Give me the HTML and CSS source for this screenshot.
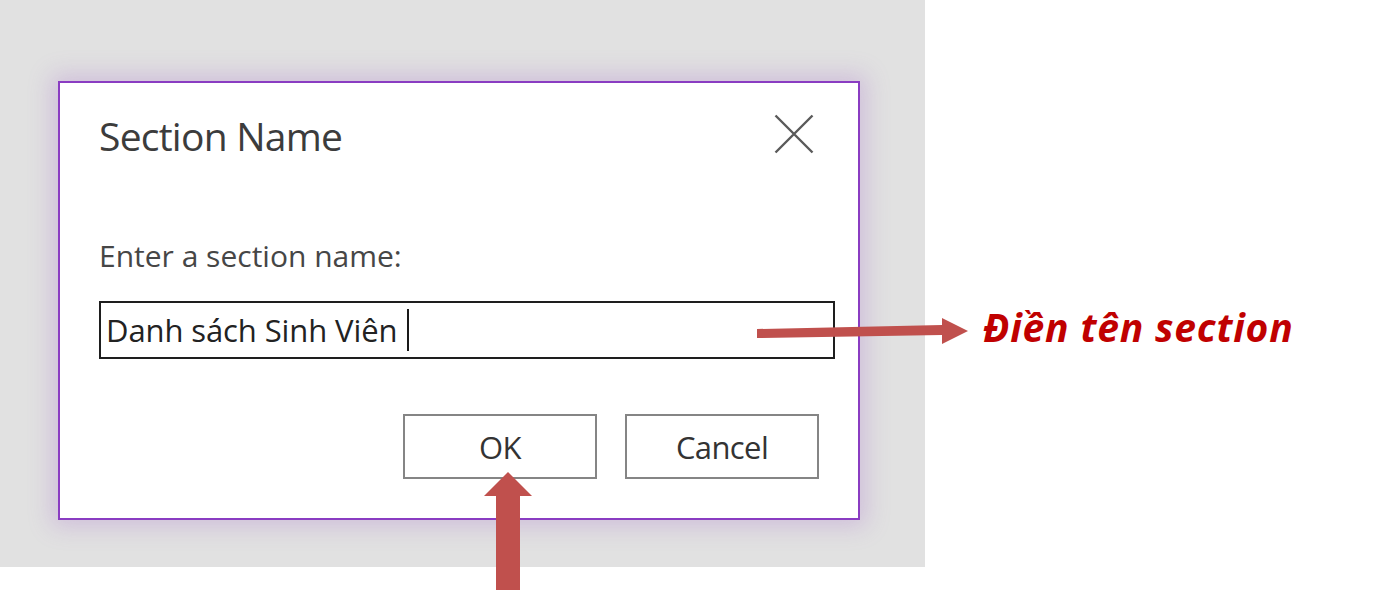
FILE: index.html
```html
<!DOCTYPE html>
<html lang="vi">
<head>
<meta charset="utf-8">
<title>Section Name</title>
<link rel="stylesheet" href="styles.css">
</head>
<body>
<div class="page">
  <div class="stage">
    <div class="dialog">
      <div class="dialog-header">
        <div class="dialog-title">Section Name</div>
        <button class="close-btn" aria-label="Close">
          <svg width="40" height="40" viewBox="0 0 40 40"><path d="M1.5 1.5 L38.5 38.5 M38.5 1.5 L1.5 38.5" stroke="#5a5a5a" stroke-width="2.4" fill="none"/></svg>
        </button>
      </div>
      <div class="field-label">Enter a section name:</div>
      <div class="text-input"><span class="input-text">Danh sách Sinh Viên</span><span class="caret"></span></div>
      <div class="actions">
        <button class="btn">OK</button>
        <button class="btn">Cancel</button>
      </div>
    </div>
  </div>
  <svg class="annotations" width="1394" height="590" viewBox="0 0 1394 590">
    <polygon points="757,329 942,325 942,318 968,331 942,344 942,335 757,338" fill="#c0504d"/>
    <polygon points="508,472 532,496 520,496 520,590 496,590 496,496 484,496" fill="#c0504d"/>
  </svg>
  <div class="note">Điền tên section</div>
</div>
</body>
</html>
```
FILE: styles.css
```css
html, body {
  margin: 0;
  padding: 0;
  background: #ffffff;
}
.page {
  position: relative;
  width: 1394px;
  height: 590px;
  overflow: hidden;
  font-family: "Open Sans", "Noto Sans", sans-serif;
}
.stage {
  width: 925px;
  height: 567px;
  background: #e1e1e1;
  box-sizing: border-box;
  padding-top: 81px;
  padding-left: 58px;
}
.dialog {
  width: 802px;
  height: 439px;
  box-sizing: border-box;
  border: 2px solid #8a3cc2;
  background: #ffffff;
  box-shadow: 0 0 22px 6px rgba(160, 100, 200, 0.28);
  padding: 27px 0 0 39px;
  display: flex;
  flex-direction: column;
}
.dialog-header {
  display: flex;
  justify-content: space-between;
  align-items: flex-start;
}
.dialog-title {
  font-size: 39px;
  line-height: 52px;
  color: #3c3c3c;
  letter-spacing: -0.75px;
}
.close-btn {
  margin: 4px 44px 0 0;
  padding: 0;
  border: none;
  background: none;
  width: 40px;
  height: 40px;
  display: block;
}
.close-btn svg {
  display: block;
}
.field-label {
  margin-top: 74px;
  font-size: 30px;
  line-height: 40px;
  color: #464646;
}
.text-input {
  margin-top: 25px;
  width: 736px;
  height: 58px;
  box-sizing: border-box;
  border: 2px solid #1e1e1e;
  padding-left: 5px;
  display: flex;
  align-items: center;
}
.input-text {
  font-size: 31px;
  line-height: 54px;
  color: #222222;
  letter-spacing: -0.1px;
}
.caret {
  display: inline-block;
  width: 2px;
  height: 42px;
  background: #1a1a1a;
  margin-left: 10px;
}
.actions {
  margin-top: 55px;
  margin-right: 39px;
  display: flex;
  justify-content: flex-end;
  gap: 28px;
}
.btn {
  width: 194px;
  height: 65px;
  box-sizing: border-box;
  border: 2px solid #858585;
  background: #ffffff;
  font-family: "Open Sans", "Noto Sans", sans-serif;
  font-size: 31px;
  color: #333333;
  letter-spacing: -0.6px;
  padding: 0;
}
.annotations {
  position: absolute;
  left: 0;
  top: 0;
  pointer-events: none;
}
.note {
  position: absolute;
  left: 983px;
  top: 302px;
  font-family: "Open Sans", "Noto Sans", sans-serif;
  font-weight: 700;
  font-style: italic;
  font-size: 39px;
  line-height: 50px;
  letter-spacing: 0.8px;
  color: #c00000;
  white-space: nowrap;
}
```
